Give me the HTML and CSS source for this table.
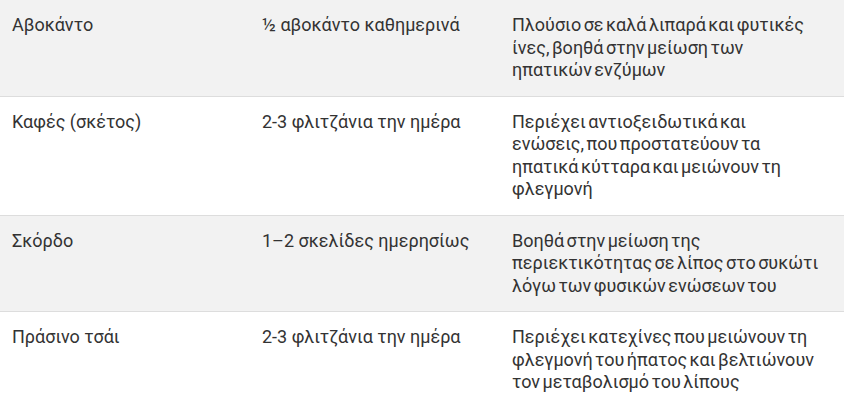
FILE: index.html
```html
<!DOCTYPE html>
<html lang="el">
<head>
<meta charset="utf-8">
<link rel="stylesheet" href="styles.css">
</head>
<body>
<div class="table">
  <div class="row shaded">
    <div class="cell">Αβοκάντο</div>
    <div class="cell">½ αβοκάντο καθημερινά</div>
    <div class="cell desc">Πλούσιο σε καλά λιπαρά και φυτικές ίνες, βοηθά στην μείωση των ηπατικών ενζύμων</div>
  </div>
  <div class="row">
    <div class="cell">Καφές (σκέτος)</div>
    <div class="cell">2-3 φλιτζάνια την ημέρα</div>
    <div class="cell desc">Περιέχει αντιοξειδωτικά και ενώσεις, που προστατεύουν τα ηπατικά κύτταρα και μειώνουν τη φλεγμονή</div>
  </div>
  <div class="row shaded">
    <div class="cell">Σκόρδο</div>
    <div class="cell">1–2 σκελίδες ημερησίως</div>
    <div class="cell desc">Βοηθά στην μείωση της περιεκτικότητας σε λίπος στο συκώτι λόγω των φυσικών ενώσεων του</div>
  </div>
  <div class="row">
    <div class="cell">Πράσινο τσάι</div>
    <div class="cell">2-3 φλιτζάνια την ημέρα</div>
    <div class="cell desc">Περιέχει κατεχίνες που μειώνουν τη φλεγμονή του ήπατος και βελτιώνουν τον μεταβολισμό του λίπους</div>
  </div>
</div>
</body>
</html>
```

FILE: styles.css
```css
html, body {
  margin: 0;
  padding: 0;
  background: #ffffff;
}
body {
  font-family: Roboto, "Noto Sans", sans-serif;
  font-size: 18px;
  line-height: 22.5px;
  color: #333333;
}
.table {
  width: 844px;
}
.row {
  display: grid;
  grid-template-columns: 250px 250px 1fr;
  border-bottom: 1px solid #dddddd;
}
.row.shaded {
  background: #f2f2f2;
}
.cell {
  padding: 14px 12px;
}
.cell.desc {
  padding-right: 24.5px;
  word-spacing: -2px;
}
```
